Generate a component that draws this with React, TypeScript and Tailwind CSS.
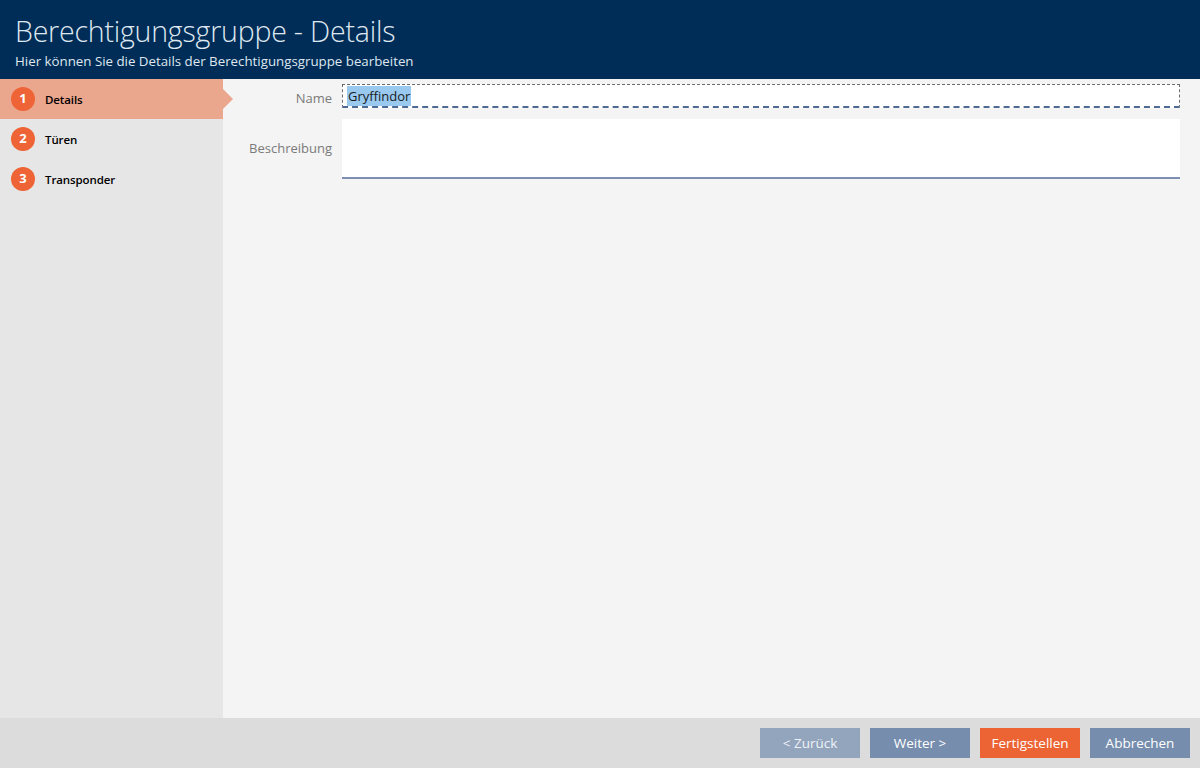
import React, { useState } from 'react';

const steps = ['Details', 'Türen', 'Transponder'];

export default function App() {
  const [active] = useState(0);

  return (
    <div className="w-[1200px] h-[768px] flex flex-col bg-[#f4f4f4] overflow-hidden font-['Open_Sans',sans-serif]">
      {/* header */}
      <div className="h-[79px] shrink-0 bg-[#002d57] pl-[15px] pt-[11px] text-[#dfe7f0]">
        <div className="text-[28.5px] leading-[40px] font-light tracking-[-0.2px]">Berechtigungsgruppe - Details</div>
        <div className="text-[13.3px] leading-[18px] mt-[1px]">Hier können Sie die Details der Berechtigungsgruppe bearbeiten</div>
      </div>

      <div className="flex flex-1 min-h-0">
        {/* sidebar */}
        <div className="w-[223px] shrink-0 bg-[#e6e6e6] flex flex-col">
          {steps.map((s, i) => (
            <div
              key={s}
              className={`relative h-[40px] flex items-center pl-[11px] ${i === active ? 'bg-[#eba68e]' : ''}`}
            >
              <div className="w-[24px] h-[24px] rounded-full bg-[#ee6436] text-white text-[13px] font-bold flex items-center justify-center">
                {i + 1}
              </div>
              <span className="ml-[10px] mt-[1px] text-[11.5px] font-semibold text-black tracking-[-0.1px]">{s}</span>
              {i === active && (
                <div className="absolute left-full top-[10px] w-0 h-0 border-y-[10px] border-y-transparent border-l-[10px] border-l-[#eba68e]" />
              )}
            </div>
          ))}
        </div>

        {/* main */}
        <div className="flex-1 pl-[20px] pr-[20px] pt-[5px]">
          <div className="flex items-center">
            <div className="w-[89px] text-right text-[13px] leading-[18px] mt-[3px] text-[#7a7a7a]">Name</div>
            <div className="ml-[10px] flex-1 h-[24px] bg-white border border-dashed border-[#6b6b6b] border-b-2 border-b-[#4f6a93] flex items-center pl-[4px]">
              <span className="bg-[#99c9ef] text-[#1a1a1a] text-[13px] leading-[20px] px-[1px] mt-[1px]">Gryffindor</span>
            </div>
          </div>
          <div className="flex items-center mt-[11px]">
            <div className="w-[89px] text-right text-[13px] text-[#7a7a7a]">Beschreibung</div>
            <div className="ml-[10px] flex-1 h-[60px] bg-white border-b-[2px] border-[#7b8fb0]" />
          </div>
        </div>
      </div>

      {/* footer */}
      <div className="h-[50px] shrink-0 bg-[#dcdcdc] flex items-center justify-end gap-[10px] pr-[10px]">
        <button className="w-[100px] h-[30px] bg-[#93a4bd] text-[#eef2f7] text-[13.5px]">&lt; Zurück</button>
        <button className="w-[100px] h-[30px] bg-[#768dad] text-white text-[13.5px]">Weiter &gt;</button>
        <button className="w-[100px] h-[30px] bg-[#ec6334] text-white text-[13.5px]">Fertigstellen</button>
        <button className="w-[100px] h-[30px] bg-[#768dad] text-white text-[13.5px]">Abbrechen</button>
      </div>
    </div>
  );
}
